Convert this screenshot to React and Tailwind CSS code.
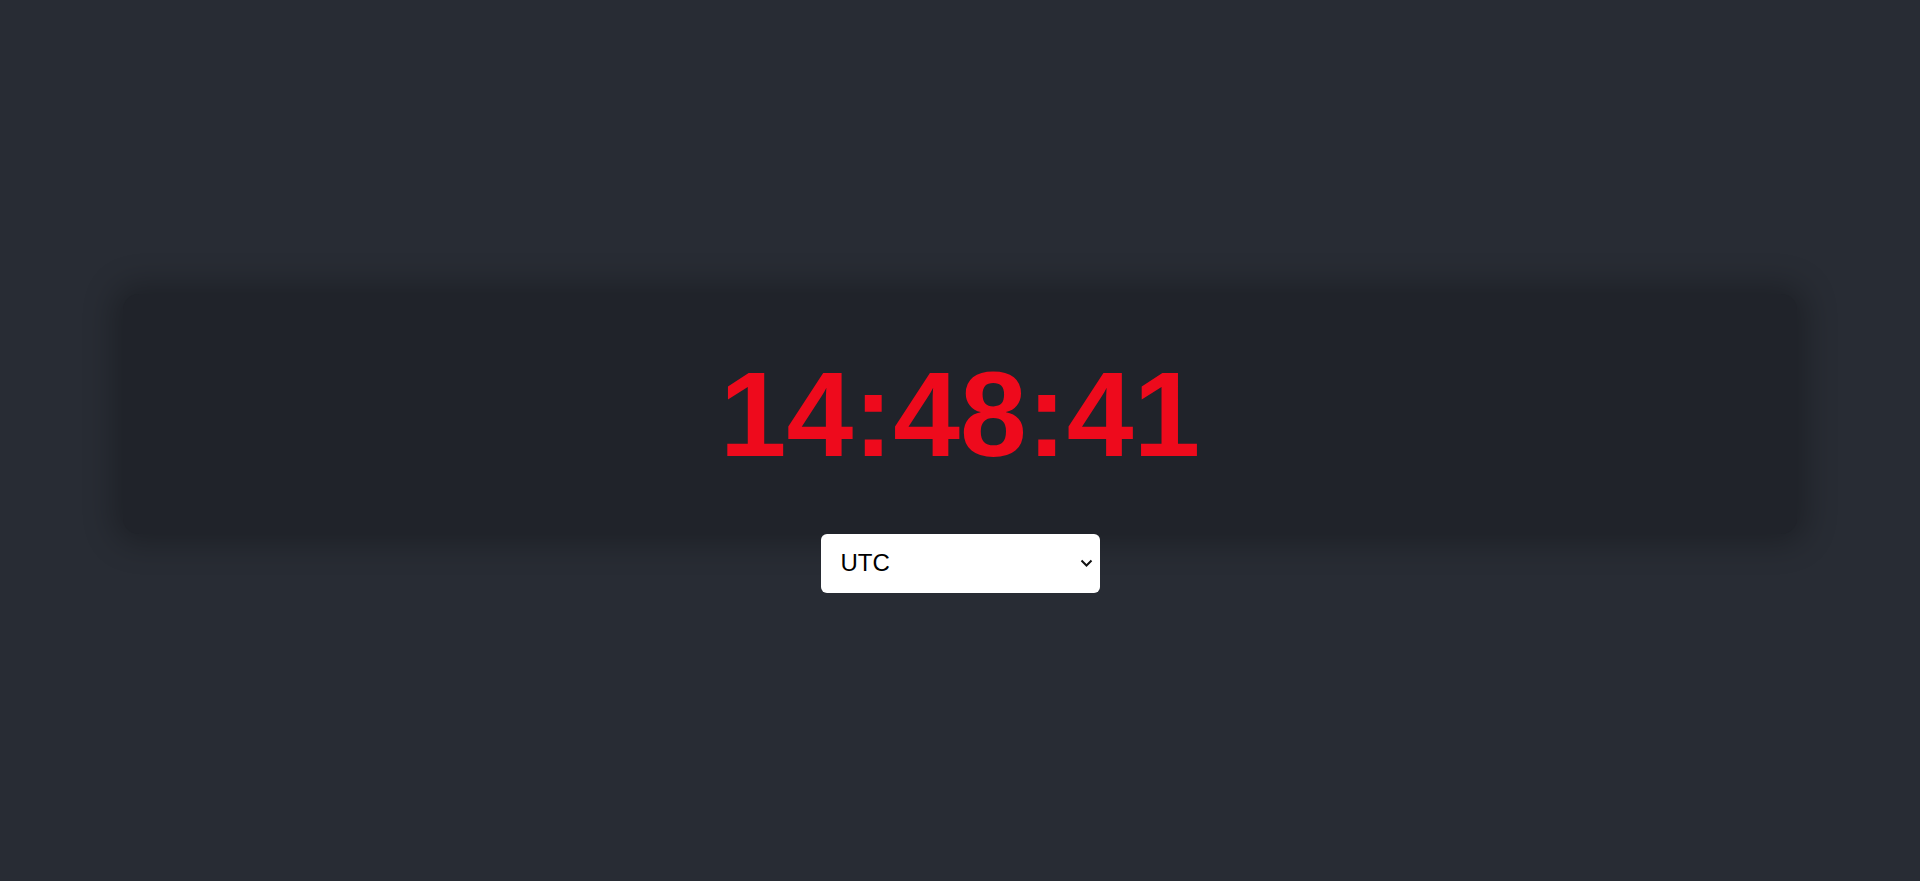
import React, { useState } from "react";

const App = () => {
  const [zone, setZone] = useState("UTC");

  return (
    <div className="min-h-screen bg-[#282c34] flex flex-col items-center justify-center pt-[5px] font-['Liberation_Sans',Arial,sans-serif]">
      <div className="w-[1674px] h-[240px] bg-[#20232a] rounded-2xl shadow-[0_0_30px_10px_rgba(0,0,0,0.25)] flex items-center justify-center">
        <h1 className="text-[120px] font-bold leading-none text-[#ee0a1c]">
          14:48:41
        </h1>
      </div>
      <div className="relative">
        <select
          value={zone}
          onChange={(e) => setZone(e.target.value)}
          className="appearance-none w-[279px] h-[59px] bg-white text-black text-2xl rounded-md pl-[20px] pr-8 border-0 outline-none"
        >
          <option value="UTC">UTC</option>
          <option value="America/New_York">America/New_York</option>
          <option value="Europe/London">Europe/London</option>
          <option value="Asia/Tokyo">Asia/Tokyo</option>
        </select>
        {/* dropdown chevron */}
        <svg
          className="absolute right-[7px] top-[25px] pointer-events-none"
          width="13"
          height="9"
          viewBox="0 0 13 9"
          fill="none"
        >
          <path d="M1.5 1.5 L6.5 6.5 L11.5 1.5" stroke="#111" strokeWidth="2" />
        </svg>
      </div>
    </div>
  );
};

export default App;
